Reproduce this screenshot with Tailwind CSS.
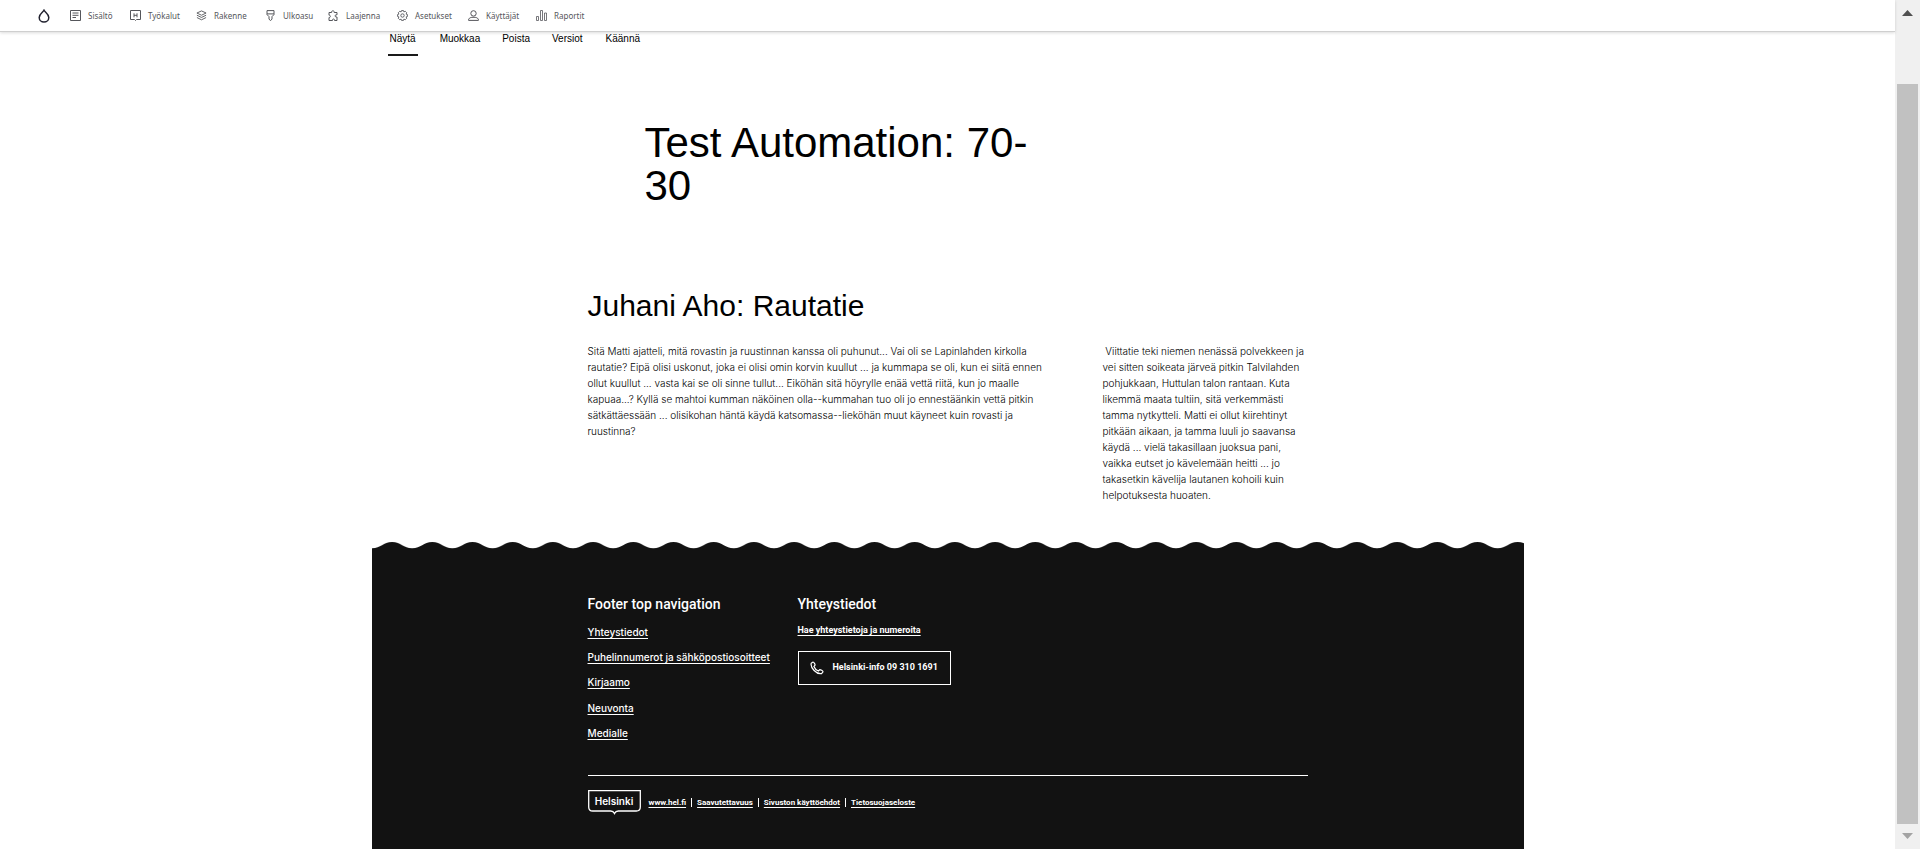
<!DOCTYPE html>
<html lang="fi">
<head>
<meta charset="utf-8">
<meta name="viewport" content="width=device-width, initial-scale=1">
<title>Test Automation: 70-30</title>
<script src="https://cdn.jsdelivr.net/npm/@tailwindcss/browser@4"></script>
</head>
<body class="flex h-screen overflow-hidden bg-white font-['Liberation_Sans',Arial,sans-serif] text-black">
<div class="flex min-w-0 flex-1 flex-col">
  <header class="z-10 shrink-0 border-b border-[#cfcfcf] bg-white shadow-[0_1px_3px_rgba(0,0,0,0.14)]">
    <nav aria-label="Hallinta" class="flex h-[31px] items-center pl-[37px] font-['Noto_Sans',sans-serif] text-[8px] text-[#55565b]">
      <a href="#" aria-label="Etusivu" class="mr-[19px]"><svg class="size-[14px]" viewBox="0 0 14 14" fill="none" stroke="#222330" stroke-width="1.5"><path d="M7 1.2C6 3.4 2.2 5 2.2 8.5a4.8 4.6 0 0 0 9.6 0C11.800 5 8 3.400 7 1.200z"/></svg></a>
      <a href="#" class="flex w-[60px] items-center gap-[7px]"><svg class="size-[11px]" viewBox="0 0 11 11" fill="none" stroke="currentColor"><path d="M.5.500h10v10H.500zM2.500 3h6M2.500 5.300h6M2.500 7.500h3.500"/></svg>Sisältö</a>
      <a href="#" class="flex w-[66px] items-center gap-[7px]"><svg class="size-[11px]" viewBox="0 0 11 11" fill="none" stroke="currentColor"><path d="M.5.500h10v9h-4l-1 1-1-1h-4zM4 3.300v4M7 3.300v4M4 5.300h3"/></svg>Työkalut</a>
      <a href="#" class="flex w-[69px] items-center gap-[7px]"><svg class="size-[11px]" viewBox="0 0 12 12" fill="none" stroke="currentColor"><path d="M6 1l5 2.300-5 2.400-5-2.400zM1 5.700l5 2.400 5-2.400M1 8.200l5 2.500 5-2.500"/></svg>Rakenne</a>
      <a href="#" class="flex w-[63px] items-center gap-[7px]"><svg class="size-[11px]" viewBox="0 0 11 11" fill="none" stroke="currentColor"><path d="M2 .600h7v4L7 6.600v2.600L5.500 10.500 4 9.200V6.600L2 4.600zM2 3.900h7"/></svg>Ulkoasu</a>
      <a href="#" class="flex w-[69px] items-center gap-[7px]"><svg class="size-[11px]" viewBox="0 0 11 11" fill="none" stroke="currentColor"><path d="M1 2.500h2.600C2.900.300 6.900.300 6.200 2.500H9v2.300H8c-1.200.2-1.200 2 0 2.200h1v3.500H6.500c.6-2-2.600-2-2 0H1V7.500c1.800.4 1.800-2.700 0-2.300z"/></svg>Laajenna</a>
      <a href="#" class="flex w-[71px] items-center gap-[7px]"><svg class="size-[11px]" viewBox="0 0 11 11" fill="none" stroke="currentColor" stroke-width=".9"><circle cx="5.500" cy="5.500" r="1.700"/><path d="M4.500.600h2l.4 1.300 1.400-.6L9.700 2.700l-.6 1.400 1.300.4v2l-1.300.4.6 1.400-1.400 1.400-1.400-.6-.4 1.300h-2l-.4-1.300-1.400.6-1.400-1.400.6-1.400L.600 6.500v-2l1.300-.4-.6-1.400 1.400-1.400 1.400.6z"/></svg>Asetukset</a>
      <a href="#" class="flex w-[68px] items-center gap-[7px]"><svg class="size-[11px]" viewBox="0 0 11 11" fill="none" stroke="currentColor"><circle cx="5.500" cy="3.400" r="2.700"/><path d="M.600 10.400V9.200C1.600 7.600 3 7.500 4 7.300h3c1 .2 2.400.3 3.400 1.900v1.200z"/></svg>Käyttäjät</a>
      <a href="#" class="flex items-center gap-[7px]"><svg class="size-[11px]" viewBox="0 0 11 11" fill="none" stroke="currentColor" stroke-width=".8"><path d="M.500 6.500h2v4h-2zM4.500.500h2v10h-2zM8.500 3h2v7.500h-2z"/></svg>Raportit</a>
    </nav>
  </header>
  <div class="mx-auto flex min-h-0 w-full max-w-[1152px] flex-1 flex-col">
    <nav aria-label="Välilehdet" class="flex h-6 shrink-0 gap-[21px] pl-4 text-[10px] leading-[13px]">
      <a href="#" aria-current="page" class="border-b-2 border-[#1a1a1a] px-[2px]">Näytä</a>
      <a href="#" class="px-[1px]">Muokkaa</a>
      <a href="#">Poista</a>
      <a href="#" class="px-[1px]">Versiot</a>
      <a href="#" class="px-[1px]">Käännä</a>
    </nav>
    <main class="mx-auto w-full max-w-[720px]">
      <h1 class="ml-[57px] mt-[65px] max-w-[400px] text-[42px] leading-[43px]">Test Automation: 70-<wbr>30</h1>
      <h2 class="mt-[80px] text-[30px] leading-[38px]">Juhani Aho: Rautatie</h2>
      <div class="mt-[18px] flex justify-between font-['Inter',sans-serif] text-[10px] font-light leading-[16px] whitespace-nowrap text-black">
        <p>Sitä Matti ajatteli, mitä rovastin ja ruustinnan kanssa oli puhunut... Vai oli se Lapinlahden kirkolla<br>rautatie? Eipä olisi uskonut, joka ei olisi omin korvin kuullut ... ja kummapa se oli, kun ei siitä ennen<br>ollut kuullut ... vasta kai se oli sinne tullut... Eiköhän sitä höyrylle enää vettä riitä, kun jo maalle<br>kapuaa...? Kyllä se mahtoi kumman näköinen olla--kummahan tuo oli jo ennestäänkin vettä pitkin<br>sätkättäessään ... olisikohan häntä käydä katsomassa--lieköhän muut käyneet kuin rovasti ja<br>ruustinna?</p>
        <p class="w-[205px]">&nbsp;Viittatie teki niemen nenässä polvekkeen ja<br>vei sitten soikeata järveä pitkin Talvilahden<br>pohjukkaan, Huttulan talon rantaan. Kuta<br>likemmä maata tultiin, sitä verkemmästi<br>tamma nytkytteli. Matti ei ollut kiirehtinyt<br>pitkään aikaan, ja tamma luuli jo saavansa<br>käydä ... vielä takasillaan juoksua pani,<br>vaikka eutset jo kävelemään heitti ... jo<br>takasetkin kävelija lautanen kohoili kuin<br>helpotuksesta huoaten.</p>
      </div>
    </main>
    <svg class="mt-[39px] h-[7px] w-full shrink-0" aria-hidden="true"><defs><pattern id="wave" width="40.200" height="7" patternUnits="userSpaceOnUse"><path d="M0 6.300C9 6.300 11 0 20.100 0S31.200 6.300 40.200 6.300V7H0z" fill="#121212"/></pattern></defs><rect width="100%" height="7" fill="url(#wave)"/></svg>
    <footer class="flex-1 bg-[#121212] font-['Roboto',sans-serif] font-medium text-white">
      <div class="mx-auto max-w-[720px]">
        <div class="flex gap-[29px] pt-[45px]">
          <nav aria-label="Footer top navigation" class="w-[181px] whitespace-nowrap">
            <h2 class="text-[14px] leading-[20px]">Footer top navigation</h2>
            <ul class="mt-[11px] flex flex-col gap-[12px] font-['Inter',sans-serif] text-[10px] font-medium leading-[14px] underline underline-offset-2">
              <li class="h-[13px]"><a href="#">Yhteystiedot</a></li>
              <li class="h-[13px]"><a href="#">Puhelinnumerot ja sähköpostiosoitteet</a></li>
              <li class="h-[14px]"><a href="#">Kirjaamo</a></li>
              <li class="h-[13px]"><a href="#">Neuvonta</a></li>
              <li class="h-[14px]"><a href="#">Medialle</a></li>
            </ul>
          </nav>
          <section class="flex flex-col items-start">
            <h2 class="text-[14px] leading-[20px]">Yhteystiedot</h2>
            <a href="#" class="mt-[10px] text-[9px] font-bold leading-[12px] underline underline-offset-2">Hae yhteystietoja ja numeroita</a>
            <a href="tel:093101691" class="mt-[15px] flex h-[34px] w-[153px] items-center gap-[9px] whitespace-nowrap border border-white pl-[11px] text-[9px] font-bold"><svg class="size-[14px]" viewBox="0 0 14 14" fill="none" stroke="currentColor" stroke-width="1.200"><path d="M1.200 2.300L3 1c1 0 2.300 2.500 2 3.200L3.900 5.500c.7 1.700 2.500 3.600 4.400 4.500L9.700 8.700c.8-.2 3.300 1.100 3.300 2.100L11.500 12.600C6.500 13.500.200 6.800 1.200 2.300z"/></svg>Helsinki-info 09 310 1691</a>
          </section>
        </div>
        <div class="mt-[35px] flex items-center border-t border-white pt-[14px]">
          <a href="#" class="grid h-[25px] w-[53px] place-items-center"><span class="col-start-1 row-start-1"><svg class="h-[25px] w-[53px]" viewBox="0 0 53 25" fill="none" stroke="#fff" stroke-width="1.300" aria-hidden="true"><path d="M.700.700h51.600v16.300q0 4-4 4h-18q-2.600 0-3.800 2.500Q25.300 21 22.700 21h-18q-4 0-4-4z"/></svg></span><span class="col-start-1 row-start-1 mb-[3px] font-['Inter',sans-serif] text-[10px] font-semibold leading-[12px]">Helsinki</span></a>
          <ul class="ml-[8px] flex text-[8px] font-bold leading-[9px] underline underline-offset-2">
            <li class="border-r border-white pr-[5px]"><a href="#">www.hel.fi</a></li>
            <li class="border-r border-white px-[5px]"><a href="#">Saavutettavuus</a></li>
            <li class="border-r border-white px-[5px]"><a href="#">Sivuston käyttöehdot</a></li>
            <li class="pl-[5px]"><a href="#">Tietosuojaseloste</a></li>
          </ul>
        </div>
      </div>
    </footer>
  </div>
</div>
<div aria-hidden="true" class="flex w-[25px] shrink-0 flex-col items-center bg-[#f0f0f0]">
  <svg class="mt-[10px] h-[6px] w-[11px] shrink-0" viewBox="0 0 11 6"><path d="M0 6L5.500 0 11 6z" fill="#505050"/></svg>
  <div class="mb-[9px] mt-[68px] w-[21px] flex-1 bg-[#c1c1c1]"></div>
  <svg class="mb-[10px] h-[6px] w-[11px] shrink-0" viewBox="0 0 11 6"><path d="M0 0h11L5.500 6z" fill="#a3a3a3"/></svg>
</div>
</body>
</html>
